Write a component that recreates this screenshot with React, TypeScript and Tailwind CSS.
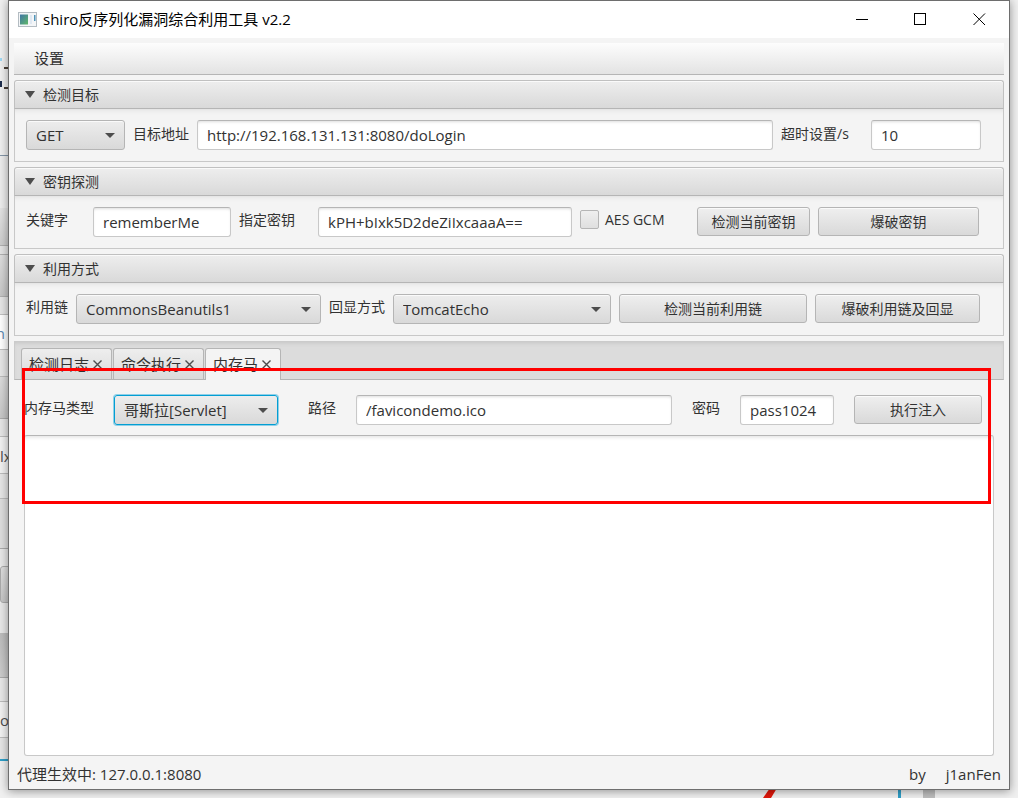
import { useState, type ReactNode } from "react";
import clsx from "clsx";

const FIELD =
  "h-[30px] min-w-0 rounded-[3px] border border-[#c8c8c8] border-t-[#b5b5b5] bg-white px-[9px] text-[15px] text-[#323232] shadow-[inset_0_2px_3px_-1px_#dddddd] outline-none";

const BUTTON =
  "h-[29px] shrink-0 rounded-[3px] border border-[#b5b5b5] bg-linear-to-b from-[#efefef] to-[#d9d9d9] text-sm text-[#323232] shadow-[inset_0_1px_0_#fafafa]";

interface SelectProps {
  id: string;
  options: string[];
  className?: string;
  focused?: boolean;
}

function Select({ id, options, className, focused }: SelectProps) {
  return (
    <div className={clsx("relative shrink-0", className)}>
      <select
        id={id}
        className={clsx(
          "h-[30px] w-full appearance-none rounded-[3px] border bg-linear-to-b from-[#ededed] to-[#d9d9d9] pr-6 pl-[9px] text-[15px] text-[#323232] outline-none",
          focused
            ? "border-[#039ed3] shadow-[0_0_0_1px_#8fd0e8]"
            : "border-[#b5b5b5] shadow-[inset_0_1px_0_#fafafa]"
        )}
      >
        {options.map((o) => (
          <option key={o}>{o}</option>
        ))}
      </select>
      <svg className="pointer-events-none absolute top-[13px] right-[10px] h-[5px] w-[10px]" viewBox="0 0 10 5">
        <path d="M0 0H10L5 5Z" fill="#4d4d4d" />
      </svg>
    </div>
  );
}

function Label({ htmlFor, className, children }: { htmlFor: string; className?: string; children: ReactNode }) {
  return (
    <label htmlFor={htmlFor} className={clsx("shrink-0 text-sm whitespace-nowrap", className)}>
      {children}
    </label>
  );
}

function Panel({ title, children }: { title: string; children: ReactNode }) {
  const [open, setOpen] = useState(true);
  return (
    <section>
      <button
        type="button"
        aria-expanded={open}
        onClick={() => setOpen(!open)}
        className="flex h-[29px] w-full items-center gap-2 rounded-t-[3px] border border-[#c0c0c0] border-b-[#b5b5b5] bg-linear-to-b from-[#eeeeee] to-[#d9d9d9] pl-[10px] text-sm shadow-[inset_0_1px_0_#fafafa]"
      >
        <svg className="h-[7px] w-[10px]" viewBox="0 0 10 7">
          <path d="M0 0H10L5 7Z" fill="#4d4d4d" />
        </svg>
        {title}
      </button>
      {open && (
        <div className="flex h-[53px] items-start border-x border-b border-[#c8c8c8] bg-[#f4f4f4] pt-[11px] pr-[22px] pl-[11px] shadow-[inset_0_5px_5px_-4px_#dddddd]">
          {children}
        </div>
      )}
    </section>
  );
}

function TitleBar() {
  return (
    <header className="flex h-[37px] shrink-0 items-center bg-white pl-[9px] text-black">
      <svg className="h-4 w-[19px]" viewBox="0 0 19 16">
        <defs>
          <linearGradient id="logo" x1="0" y1="0" x2="1" y2="1">
            <stop offset="0" stopColor="#3f76a5" />
            <stop offset="1" stopColor="#5fb768" />
          </linearGradient>
        </defs>
        <rect x="0.5" y="0.5" width="18" height="14" fill="#f3f5f7" stroke="#b4bcc2" />
        <rect x="2" y="2.5" width="8" height="10" fill="url(#logo)" />
        <rect x="12" y="3" width="2" height="9" fill="#dfe8f2" />
        <rect x="16" y="3" width="1.5" height="6" fill="#4f93b8" />
      </svg>
      <h1 className="ml-[6px] flex-1 text-[15px]">shiro反序列化漏洞综合利用工具 v2.2</h1>
      <button type="button" aria-label="最小化" className="flex h-full w-[58px] items-center justify-center">
        <svg width="13" height="13" viewBox="0 0 13 13" stroke="#000">
          <path d="M0 6.5H12" />
        </svg>
      </button>
      <button type="button" aria-label="最大化" className="flex h-full w-[58px] items-center justify-center">
        <svg width="13" height="13" viewBox="0 0 13 13" fill="none" stroke="#000">
          <rect x="0.5" y="0.5" width="11" height="11" />
        </svg>
      </button>
      <button type="button" aria-label="关闭" className="flex h-full w-[60px] items-center justify-center">
        <svg width="13" height="13" viewBox="0 0 13 13" stroke="#000">
          <path d="M0.5 0.5L12 12M12 0.5L0.5 12" />
        </svg>
      </button>
    </header>
  );
}

const TABS = ["检测日志", "命令执行", "内存马"];

function TabBar() {
  const [active, setActive] = useState(2);
  return (
    <div
      role="tablist"
      className="flex h-[39px] gap-px border border-[#cbcbcb] border-b-[#b5b5b5] bg-[#dcdcdc] pt-[6px] pl-[6px] shadow-[inset_0_3px_4px_-2px_#c4c4c4]"
    >
      {TABS.map((tab, i) => (
        <button
          key={tab}
          type="button"
          role="tab"
          aria-selected={i === active}
          onClick={() => setActive(i)}
          className={clsx(
            "flex items-center gap-1 rounded-t-[3px] border border-b-0 border-[#b5b5b5] pr-[9px] pl-[7px] text-[15px] whitespace-nowrap",
            i === active ? "-mb-px bg-[#f4f4f4]" : "bg-linear-to-b from-[#eeeeee] to-[#dadada]"
          )}
        >
          {tab}
          <svg width="9" height="9" viewBox="0 0 9 9" stroke="#4d4d4d" strokeWidth="1.4">
            <path d="M0.5 0.5L8.5 8.5M8.5 0.5L0.5 8.5" />
          </svg>
        </button>
      ))}
    </div>
  );
}

// Slivers of the window that lies behind this one
function Backdrop() {
  return (
    <div aria-hidden="true" className="absolute inset-0 overflow-hidden text-[15px] leading-5 font-medium whitespace-nowrap text-[#4d4d4d]">
      <div className="flex w-[9px] flex-col">
        <div className="h-[54px] bg-[#f0f0f0]" />
        <div className="h-[101px] overflow-hidden bg-[#f0f0f0]">
          <div className="mt-1 h-[3px] w-[2px] bg-[#9ed8f4]" />
          <div className="mt-[6px] ml-1 h-[2px] bg-[#4a4038]" />
          <div className="mt-[12px] h-[6px] w-[2px] bg-[#1c2c4c]" />
          <div className="ml-1 h-[2px] bg-[#4a4038]" />
        </div>
        <div className="h-[53px] border-t border-[#8496a8] bg-[#ededed]" />
        <div className="h-[38px] border-b border-[#b0b0b0] bg-linear-to-b from-[#e4e4e4] to-[#cdcdcd]" />
        <div className="h-[8px] bg-[#e4e4e4]" />
        <div className="h-[43px] border-y border-[#b0b0b0] bg-linear-to-b from-[#dedede] to-[#c6c6c6]" />
        <div className="h-[18px] border-b border-[#c0c0c0] bg-[#e6e6e6]" />
        <div className="flex h-[35px] justify-end overflow-hidden border-b border-[#bcbcbc] bg-white pt-2 pr-1 text-[#5b86ae]">n</div>
        <div className="h-[27px] border-b border-[#bcbcbc] bg-[#e6e6e6]" />
        <div className="h-[42px] border-b border-[#aaaaaa] bg-linear-to-b from-[#dcdcdc] to-[#c6c6c6]" />
        <div className="h-[18px] border-b border-[#bcbcbc] bg-[#e6e6e6]" />
        <div className="h-[37px] border-b border-[#bcbcbc] bg-[#f2f2f2] pt-[9px]">lx</div>
        <div className="h-[25px] border-b border-[#bcbcbc] bg-[#e6e6e6]" />
        <div className="h-[50px] border-b border-[#aaaaaa] bg-[#dedede]" />
        <div className="h-[17px] bg-[#e8e8e8]" />
        <div className="h-[37px] rounded-l-[3px] border border-[#aaaaaa] bg-linear-to-b from-[#dedede] to-[#c6c6c6]" />
        <div className="h-[31px] border-b border-[#bcbcbc] bg-[#e8e8e8]" />
        <div className="h-[44px] border-b border-[#aaaaaa] bg-linear-to-b from-[#bcbcbc] to-[#cccccc]" />
        <div className="h-[24px] border-b border-[#bcbcbc] bg-[#e8e8e8]" />
        <div className="flex h-[36px] justify-end overflow-hidden border-b border-[#bcbcbc] bg-[#f2f2f2] pt-2">co</div>
        <div className="h-[23px] border-b-2 border-[#2f9fc8] bg-[#e6e6e6]" />
      </div>
      <svg className="absolute bottom-0 left-[756px]" width="24" height="10" viewBox="0 0 24 10">
        <path d="M7 10L14 0H21L15 10Z" fill="#e0170b" />
      </svg>
      <div className="absolute bottom-0 left-[898px] h-3 w-[3px] bg-[#2f9fc8]" />
      <div className="absolute bottom-0 left-[923px] h-3 w-3 bg-[#bdbdbd]" />
    </div>
  );
}

export default function App() {
  return (
    <div className="relative flex min-h-screen flex-col bg-[#f0f0f0] px-2 pb-2 font-['Open_Sans','Noto_Sans_CJK_SC',sans-serif] text-[#323232]">
      <Backdrop />
      <div className="relative flex flex-1 flex-col border border-[#6e6e6e] bg-[#f4f4f4] shadow-[0_1px_9px_#00000066]">
        <TitleBar />

        <main className="flex flex-1 flex-col px-[5px] pt-[5px]">
          <nav className="flex h-8 items-center border-b border-[#b5b5b5] bg-linear-to-b from-[#fdfdfd] to-[#e3e3e3] px-3">
            <button type="button" className="px-2 text-[15px]">
              设置
            </button>
          </nav>

          <div className="mt-[5px] flex flex-col gap-[5px]">
            <Panel title="检测目标">
              <Select id="method" options={["GET", "POST"]} className="w-[99px]" />
              <Label htmlFor="url" className="mt-1 ml-2">目标地址</Label>
              <input id="url" className={clsx(FIELD, "ml-2 flex-1")} defaultValue="http://192.168.131.131:8080/doLogin" />
              <Label htmlFor="timeout" className="mt-1 ml-2 w-[82px]">超时设置/s</Label>
              <input id="timeout" className={clsx(FIELD, "ml-2 w-[110px]")} defaultValue="10" />
            </Panel>

            <Panel title="密钥探测">
              <Label htmlFor="keyword" className="mt-[3px] w-[67px]">关键字</Label>
              <input id="keyword" className={clsx(FIELD, "w-[138px]")} defaultValue="rememberMe" />
              <Label htmlFor="key" className="mt-[3px] ml-2 w-[79px]">指定密钥</Label>
              <input id="key" className={clsx(FIELD, "flex-1")} defaultValue="kPH+bIxk5D2deZiIxcaaaA==" />
              <input
                id="gcm"
                type="checkbox"
                className="mt-[3px] ml-2 h-[19px] w-[19px] shrink-0 appearance-none rounded-[2px] border border-[#b5b5b5] bg-linear-to-b from-[#efefef] to-[#dfdfdf] checked:bg-[#039ed3]"
              />
              <Label htmlFor="gcm" className="mt-[3px] ml-[6px] w-[92px]">AES GCM</Label>
              <button type="button" className={clsx(BUTTON, "w-[113px]")}>检测当前密钥</button>
              <button type="button" className={clsx(BUTTON, "mr-[2px] ml-2 w-[161px]")}>爆破密钥</button>
            </Panel>

            <Panel title="利用方式">
              <Label htmlFor="gadget" className="mt-[3px]">利用链</Label>
              <Select id="gadget" options={["CommonsBeanutils1"]} className="ml-2 w-[245px]" />
              <Label htmlFor="echo" className="mt-[3px] ml-2">回显方式</Label>
              <Select id="echo" options={["TomcatEcho"]} className="ml-2 w-[218px]" />
              <button type="button" className={clsx(BUTTON, "ml-2 min-w-[120px] flex-1")}>检测当前利用链</button>
              <button type="button" className={clsx(BUTTON, "mr-px ml-2 w-[165px]")}>爆破利用链及回显</button>
            </Panel>
          </div>

          <div className="relative mt-[5px] flex flex-1 flex-col">
            <TabBar />
            <div className="flex flex-1 flex-col px-[10px] pt-[15px]">
              <div className="flex h-10 items-start pr-3">
                <Label htmlFor="shell" className="mt-[3px] w-[90px]">内存马类型</Label>
                <Select id="shell" options={["哥斯拉[Servlet]"]} className="w-[164px]" focused />
                <Label htmlFor="path" className="mt-[3px] ml-[30px] w-12">路径</Label>
                <input id="path" className={clsx(FIELD, "flex-1")} defaultValue="/favicondemo.ico" />
                <Label htmlFor="password" className="mt-[3px] ml-5 w-12">密码</Label>
                <input id="password" className={clsx(FIELD, "w-[94px]")} defaultValue="pass1024" />
                <button type="button" className={clsx(BUTTON, "ml-5 w-32")}>执行注入</button>
              </div>
              <textarea
                aria-label="输出"
                className="min-h-[200px] flex-1 resize-none rounded-[3px] border border-[#c8c8c8] border-t-[#b5b5b5] bg-white p-2 text-[15px] shadow-[inset_0_4px_4px_-3px_#dddddd] outline-none"
              />
            </div>
            {/* highlight frame round the injection form */}
            <div className="pointer-events-none absolute top-[27px] right-[13px] left-2 h-[136px] border-3 border-[#ff0000]" />
          </div>
        </main>

        <footer className="flex h-[33px] items-center px-2 pt-1 text-[15px]">
          <span className="flex-1">代理生效中: 127.0.0.1:8080</span>
          <span className="mr-5">by</span>
          <span>j1anFen</span>
        </footer>
      </div>
    </div>
  );
}
